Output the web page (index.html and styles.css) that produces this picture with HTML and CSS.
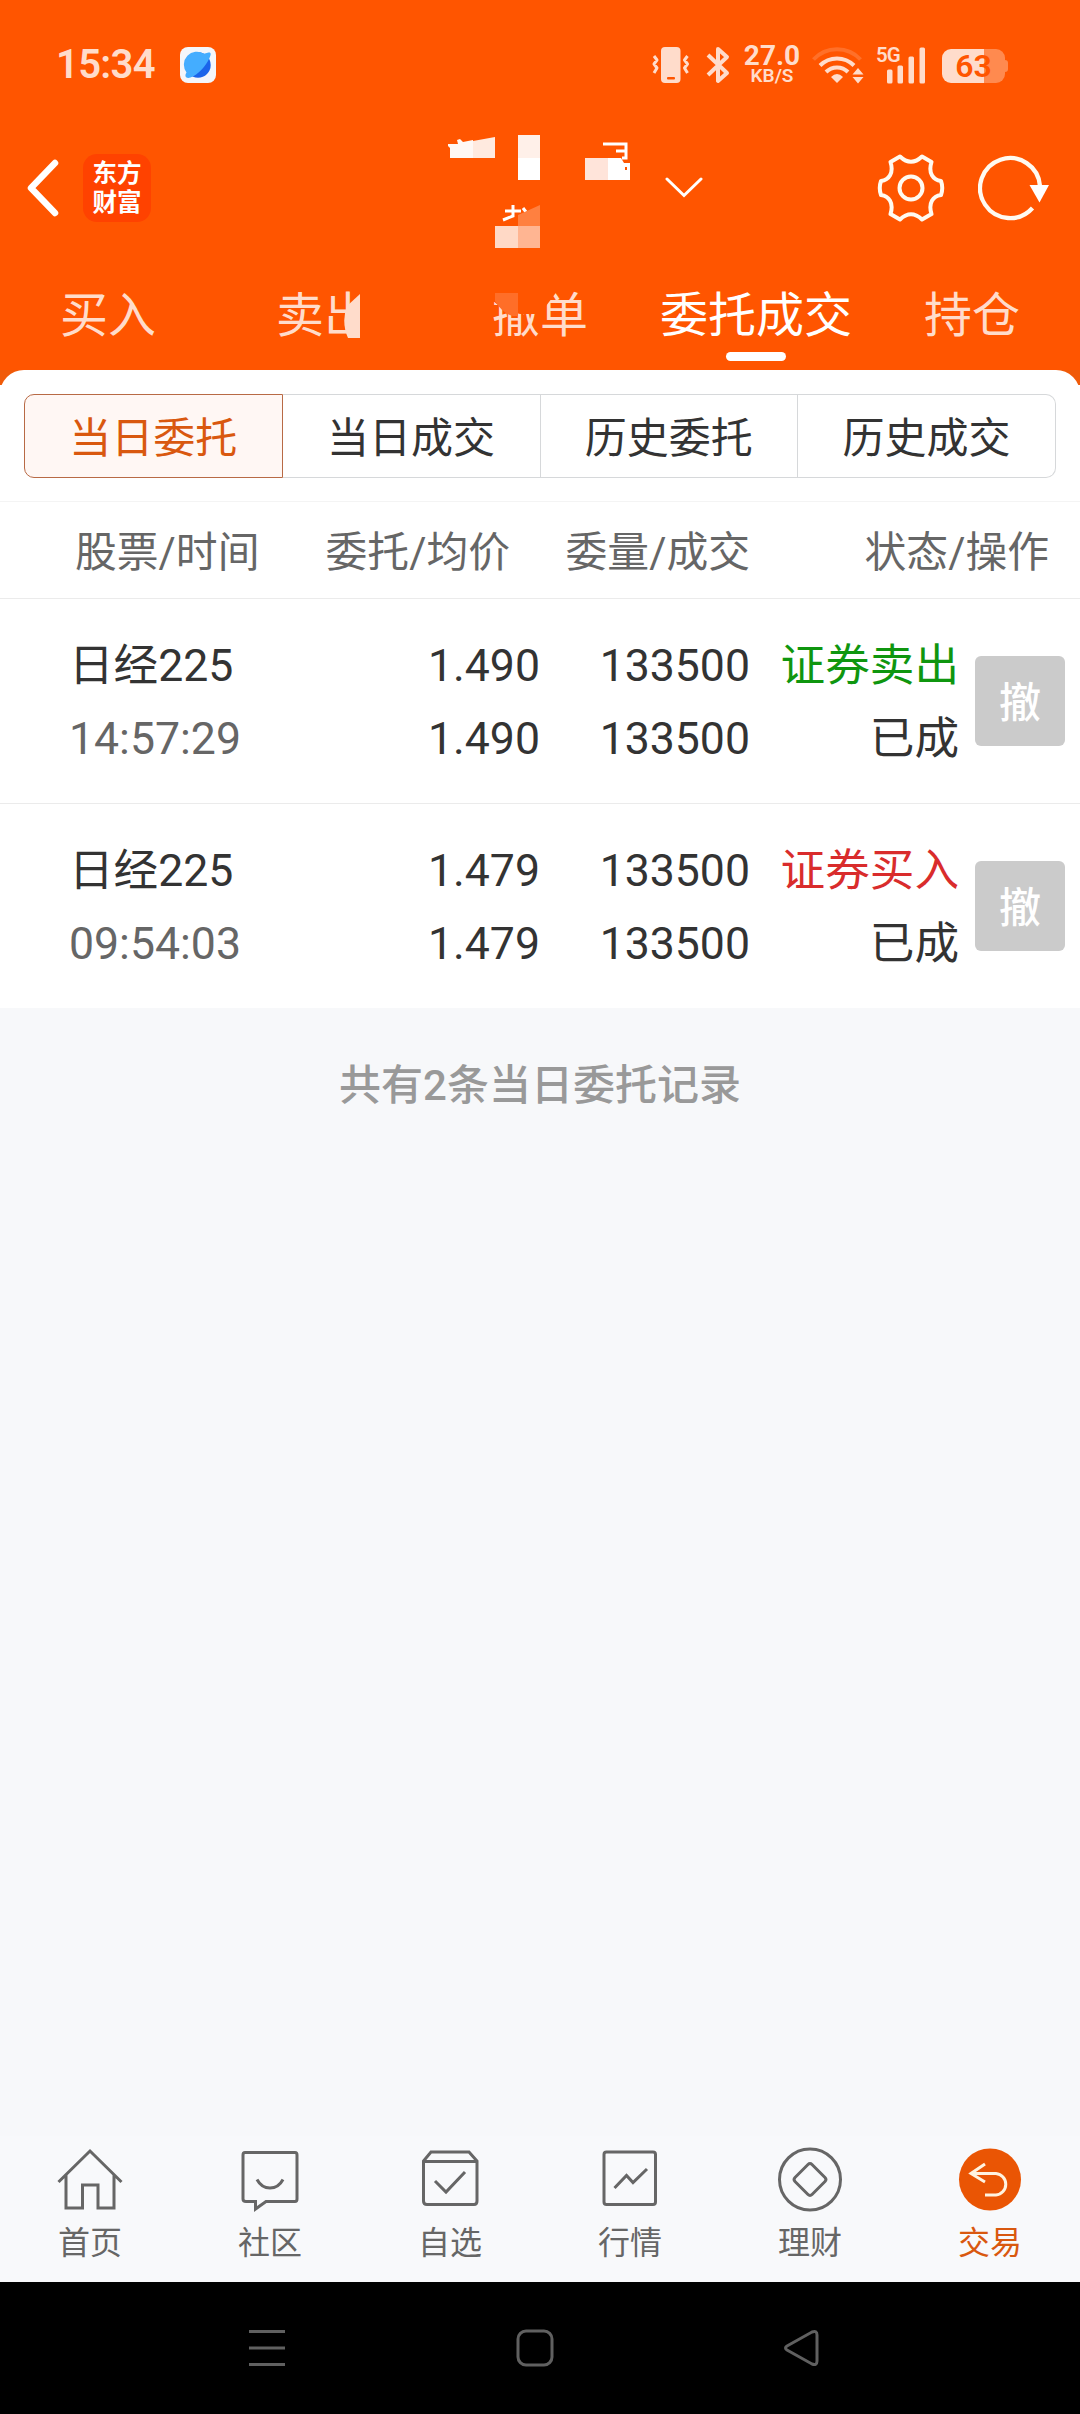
FILE: index.html
```html
<!DOCTYPE html>
<html lang="zh-CN">

<head>
  <meta charset="UTF-8">
  <meta name="viewport" content="width=device-width, initial-scale=1.0">
  <title>委托成交</title>
  <link rel="stylesheet" href="styles.css">
</head>

<body>
  <div class="app">
    <header class="header">
      <div class="status-bar">
        <span class="time">15:34</span>
        <svg class="app-icon" width="36" height="36" viewBox="0 0 36 36">
          <rect width="36" height="36" rx="8" fill="#f4f6fa" />
          <circle cx="18" cy="18" r="12.7" fill="#1b64ea" />
          <path d="M28.500 5.500C31.500 5 31 8 29.500 11C26 19 18 28 10.500 30.500C6 32 4 29 6.500 25.500A13 13 0 0 1 24 6.800Z" fill="#44adff" />
        </svg>
        <div class="status-icons">
          <svg class="vibrate" width="38" height="38" viewBox="0 0 38 38">
            <rect x="9" y="1" width="19.500" height="36" rx="4" fill="#ffdccb" />
            <rect x="15" y="31" width="8" height="2.500" rx="1" fill="#ff5500" />
            <path d="M2 10L5 14L2 18L5 22L2 27M35.500 10L32.500 14L35.500 18L32.500 22L35.500 27" fill="none" stroke="#ffdccb" stroke-width="3" stroke-linejoin="round" />
          </svg>
          <svg class="bluetooth" width="24" height="38" viewBox="0 0 24 38">
            <path d="M2 9L21 27L12 35V3L21 11L2 29" fill="none" stroke="#ffdccb" stroke-width="4" stroke-linejoin="round" />
          </svg>
          <div class="speed"><b>27.0</b><span>KB/S</span></div>
          <svg class="wifi" width="52" height="38" viewBox="0 0 52 38">
            <g fill="none" stroke="#ffdccb" stroke-width="4">
              <path d="M1.500 13.500A32 32 0 0 1 48.500 13.500" opacity=".2" />
              <path d="M8 19.500A24 24 0 0 1 42 19.500" />
              <path d="M14 26A15.500 15.500 0 0 1 36 26" />
            </g>
            <path d="M25 37L19 31Q25 25 31 31Z" fill="#ffdccb" />
            <path d="M46 22L51.500 28.500H40.500ZM46 37.500L51.500 31H40.500Z" fill="#ffdccb" />
          </svg>
          <div class="signal">
            <span class="net">5G</span>
            <svg width="48" height="38" viewBox="0 0 48 38" fill="#ffdccb">
              <rect x="10" y="23.500" width="5.500" height="14" rx="1.500" />
              <rect x="20.500" y="19.500" width="5.500" height="18" rx="1.500" />
              <rect x="31.500" y="10.500" width="5.500" height="27" rx="1.500" />
              <rect x="42.500" y="1.500" width="5.500" height="36" rx="1.500" />
            </svg>
          </div>
          <div class="battery"><span>63</span></div>
        </div>
      </div>

      <div class="title-bar">
        <svg class="back" width="34" height="58" viewBox="0 0 34 58">
          <path d="M29 4L5 29L29 54" fill="none" stroke="#fff" stroke-width="6.500" stroke-linecap="round" stroke-linejoin="round" />
        </svg>
        <div class="logo"><span>东方</span><span>财富</span></div>
        <!-- masked account name -->
        <svg class="account" width="182" height="114" viewBox="0 0 182 114">
          <path d="M2 29V19L0 17V15H10L9 11L12 10L15 13L25 11V29Z" fill="#fff8f4" />
          <path d="M25 12L47 8V29H25Z" fill="#ffeadf" />
          <rect x="70" y="6" width="22" height="23" fill="#fff0e9" />
          <rect x="70" y="29" width="22" height="22" fill="#fff" />
          <rect x="137" y="29" width="23" height="22" fill="#ffe4da" />
          <path d="M160 29H173L176 34H182V51H160Z" fill="#fff" />
          <path d="M155 15H178V29H174M168 22H178" fill="none" stroke="#fff" stroke-width="3" />
          <path d="M177 38h2v3h-2z" fill="#ff5500" />
          <path d="M57 82H73M65 76V87L55 91M75 79L78 83" fill="none" stroke="#fff" stroke-width="3" />
          <path d="M70 86L92 76V97H70Z" fill="#ff8040" />
          <rect x="47" y="97" width="23" height="22" fill="#ffd9c6" />
          <rect x="70" y="97" width="22" height="22" fill="#ffb592" />
        </svg>
        <svg class="arrow-down" width="38" height="22" viewBox="0 0 38 22">
          <path d="M2 2L19 18.500L36 2" fill="none" stroke="#fff" stroke-width="3" stroke-linecap="round" />
        </svg>
        <svg class="gear" width="68" height="68" viewBox="-34 -34 68 68">
          <path d="M-11 -31.500Q0 -21 11 -31.500L20.500 -26C17 -15 22 -8 30 -7Q32.500 0 30 7C22 8 17 15 20.500 26L11 31.500Q0 21 -11 31.500L-20.500 26C-17 15 -22 8 -30 7Q-32.500 0 -30 -7C-22 -8 -17 -15 -20.500 -26Z" fill="none" stroke="#fffaf0" stroke-width="4" stroke-linejoin="round" />
          <circle r="11.500" fill="none" stroke="#fffaf0" stroke-width="4" />
        </svg>
        <svg class="refresh" width="72" height="68" viewBox="0 0 72 68">
          <path d="M62 32A30 30 0 1 0 54.500 54" fill="none" stroke="#fffaf0" stroke-width="4.300" />
          <path d="M51.500 31H71L61.500 48.500Z" fill="#fff" />
        </svg>
      </div>

      <nav class="tabs">
        <span class="tab">买入</span>
        <span class="tab">卖出
          <svg class="mask-sell" width="30" height="50" viewBox="0 0 30 50">
            <path d="M16 0H30V50H16Z" fill="#ff5500" />
            <path d="M3 16L16 4V48H4Q-3 32 3 16Z" fill="#ffdccb" />
          </svg>
        </span>
        <span class="tab">撤单
          <svg class="mask-cancel" width="68" height="28" viewBox="0 0 68 28">
            <path d="M4 0H66L54 16L50 24H28L12 20L0 10V0Z" fill="#ff5500" />
            <path d="M3 3H26V26H21Q11 24 3 11Z" fill="#ff6e28" />
          </svg>
        </span>
        <span class="tab active">委托成交</span>
        <span class="tab">持仓</span>
      </nav>
      <div class="corner"><div class="corner-sheet"></div></div>
    </header>

    <section class="orders">
      <div class="segment">
        <span class="seg on">当日委托</span>
        <span class="seg">当日成交</span>
        <span class="seg">历史委托</span>
        <span class="seg">历史成交</span>
      </div>
      <div class="row thead">
        <span class="stock">股票/时间</span>
        <span class="price">委托/均价</span>
        <span class="amount">委量/成交</span>
        <span class="state">状态/操作</span>
      </div>
      <div class="row">
        <div class="stock"><p>日经225</p><p class="gray">14:57:29</p></div>
        <div class="price"><p>1.490</p><p>1.490</p></div>
        <div class="amount"><p>133500</p><p>133500</p></div>
        <div class="state"><p class="sell">证券卖出</p><p>已成</p></div>
        <span class="cancel">撤</span>
      </div>
      <div class="row">
        <div class="stock"><p>日经225</p><p class="gray">09:54:03</p></div>
        <div class="price"><p>1.479</p><p>1.479</p></div>
        <div class="amount"><p>133500</p><p>133500</p></div>
        <div class="state"><p class="buy">证券买入</p><p>已成</p></div>
        <span class="cancel">撤</span>
      </div>
    </section>

    <p class="summary">共有2条当日委托记录</p>

    <nav class="tabbar">
      <div class="item">
        <svg width="66" height="66" viewBox="0 0 66 66">
          <path d="M1.500 35L33 4L64.500 35M9 28V61H25.500V38H41V61H57V28" />
        </svg>
        <span>首页</span>
      </div>
      <div class="item">
        <svg width="66" height="66" viewBox="0 0 66 66">
          <path d="M8 5.500H58Q60 5.500 60 8V52Q60 54.500 58 54.500H29L18.500 62V54.500H9Q6 54.500 6 52V8Q6 5.500 8 5.500ZM20 32.500Q24.500 41 33 41Q41.500 41 46 32.500" />
        </svg>
        <span>社区</span>
      </div>
      <div class="item">
        <svg width="66" height="66" viewBox="0 0 66 66">
          <path d="M14 5H52L60 14V54Q60 57.500 57 57.500H10Q6.500 57.500 6.500 54V14ZM6.500 14.500H60M18 34L29 45L48 25" />
        </svg>
        <span>自选</span>
      </div>
      <div class="item">
        <svg width="66" height="66" viewBox="0 0 66 66">
          <rect x="7" y="5" width="51.500" height="52.500" rx="2.500" />
          <path d="M17.500 41L29.500 28.500L36 35.500L50 22" />
        </svg>
        <span>行情</span>
      </div>
      <div class="item">
        <svg width="66" height="66" viewBox="0 0 66 66">
          <circle cx="33" cy="32.500" r="30.500" />
          <path d="M35 17.500L48 30.500Q50 32.500 48 34.500L35 47.500Q33 49.500 31 47.500L18 34.500Q16 32.500 18 30.500L31 17.500Q33 15.500 35 17.500Z" />
        </svg>
        <span>理财</span>
      </div>
      <div class="item current">
        <svg width="66" height="66" viewBox="0 0 66 66">
          <circle class="disc" cx="33" cy="32.500" r="31" />
          <path class="turn" d="M28 17L14 26.500L28 35M15 26.500H39A10.800 10.800 0 0 1 39 48H28" />
        </svg>
        <span>交易</span>
      </div>
    </nav>

    <footer class="system-nav">
      <svg class="menu" width="36" height="38" viewBox="0 0 36 38"><path d="M0 2.500H36M0 19H36M0 35.500H36" /></svg>
      <svg class="home" width="38" height="38" viewBox="0 0 38 38"><rect x="2" y="2" width="34" height="34" rx="8" /></svg>
      <svg class="return" width="38" height="38" viewBox="0 0 38 38"><path d="M4 17L29 3Q34 1 34 6V32Q34 37 29 35L4 21Q1 19 4 17Z" /></svg>
    </footer>
  </div>
</body>

</html>
```
FILE: styles.css
```css
* {
  box-sizing: border-box;
}

body {
  margin: 0;
  background: #f7f8fa;
  color: #333;
  font-family: Roboto, "Noto Sans CJK SC", sans-serif;
}

p {
  margin: 0;
}

svg {
  display: block;
  flex: none;
}

.app {
  display: flex;
  flex-direction: column;
  width: 1080px;
  height: 2414px;
}

/* header */
.header {
  background: #ff5500;
  color: #fff;
}

.status-bar {
  display: flex;
  align-items: center;
  height: 129px;
  padding: 0 72px 0 56px;
  color: #ffdccb;
}

.time {
  width: 124px;
  font-size: 40px;
  font-weight: 600;
  line-height: 1;
  letter-spacing: -0.700px;
}

.status-icons {
  display: flex;
  align-items: center;
  margin-left: auto;
}

.bluetooth {
  margin-left: 16px;
}

.speed {
  display: flex;
  flex-direction: column;
  align-items: center;
  width: 54px;
  margin-left: 15px;
}

.speed b {
  font-size: 28px;
  line-height: 22px;
}

.speed span {
  font-size: 19px;
  font-weight: 600;
  line-height: 17px;
}

.wifi {
  margin-left: 13px;
}

.signal {
  position: relative;
  margin-left: 13px;
}

.net {
  position: absolute;
  left: -1px;
  top: 0;
  font-size: 20.500px;
  font-weight: 600;
  line-height: 18px;
  letter-spacing: -1px;
}

.battery {
  position: relative;
  width: 63px;
  height: 34px;
  margin: 2px 3px 0 17px;
  border-radius: 9px;
  background: linear-gradient(to right, #ffdccb 42px, #ff8a4f 42px);
  color: #ff5500;
  font-size: 32px;
  font-weight: 600;
  line-height: 35px;
  text-align: center;
}

.battery::after {
  content: "";
  position: absolute;
  right: -3px;
  top: 11px;
  width: 3px;
  height: 12px;
  border-radius: 0 3px 3px 0;
  background: #ff8a4f;
}

.title-bar {
  display: flex;
  align-items: center;
  height: 117px;
  padding: 0 30px 0 26px;
}

.logo {
  display: flex;
  flex-direction: column;
  align-items: center;
  justify-content: center;
  width: 68px;
  height: 68px;
  margin-left: 23px;
  border-radius: 14px;
  background: #ff4200;
  font-size: 24.500px;
  font-weight: 700;
  line-height: 29px;
}

.account {
  margin: 0 0 3px 297px;
  overflow: visible;
}

.arrow-down {
  margin-left: 35px;
}

.gear {
  margin-left: auto;
}

.refresh {
  margin-left: 33px;
}

.tabs {
  display: flex;
  height: 124px;
}

.tab {
  position: relative;
  flex: 1;
  padding-top: 35px;
  color: #ffdccb;
  font-size: 48px;
  line-height: 70px;
  text-align: center;
  white-space: nowrap;
}

.active {
  color: #fff;
}

.active::after {
  content: "";
  position: absolute;
  left: 78px;
  top: 106px;
  width: 60px;
  height: 9px;
  border-radius: 4.500px;
  background: #fff;
}

.mask-sell {
  position: absolute;
  left: 128px;
  top: 44px;
}

.mask-cancel {
  position: absolute;
  left: 60px;
  top: 44px;
}

.corner {
  height: 15px;
  overflow: hidden;
  background: #f05a08;
}

.corner-sheet {
  height: 60px;
  border-radius: 24px;
  background: #fff;
}

/* order list */
.orders {
  background: #fff;
}

.segment {
  display: flex;
  height: 117px;
  padding: 9px 24px 23px;
  border-bottom: 1px solid #f4f4f4;
}

.seg {
  flex: 1;
  border: 1px solid #d6d8da;
  font-size: 42px;
  line-height: 87px;
  text-align: center;
}

.seg + .seg {
  border-left-width: 0;
}

.seg:first-child {
  border-radius: 10px 0 0 10px;
}

.seg:last-child {
  border-radius: 0 10px 10px 0;
}

.seg.on {
  border-color: #b86a45;
  background: #fff7f4;
  color: #d9580f;
}

.row {
  display: flex;
  align-items: center;
  height: 205px;
  padding: 0 15px 0 69px;
  border-bottom: 1px solid #ebebeb;
  font-size: 44.600px;
  line-height: 73px;
}

.row:last-child {
  height: 204px;
  border-bottom: 0;
}

.thead {
  height: 97px;
  padding: 0 31px 0 75px;
  color: #666;
  font-size: 41.800px;
}

.stock,
.price,
.amount,
.state {
  padding-top: 4px;
}

.stock {
  width: 186px;
}

.price {
  width: 285px;
  text-align: right;
}

.amount {
  width: 210px;
  text-align: right;
}

.state {
  width: 209px;
  text-align: right;
}

.thead .price {
  width: 249px;
}

.thead .amount {
  width: 240px;
}

.thead .state {
  width: 299px;
}

.gray {
  color: #666;
}

.sell {
  color: #0f960f;
}

.buy {
  color: #d92c2c;
}

.cancel {
  width: 90px;
  height: 90px;
  margin-left: auto;
  border-radius: 6px;
  background: #cbcbcb;
  color: #fff;
  font-size: 42px;
  font-weight: 500;
  line-height: 95px;
  text-align: center;
}

.summary {
  padding-top: 42px;
  color: #999;
  font-size: 42px;
  font-weight: 500;
  line-height: 72px;
  text-align: center;
}

/* bottom bars */
.tabbar {
  display: flex;
  height: 146px;
  margin-top: auto;
  background: #f8f9fb;
}

.item {
  display: flex;
  flex: 1;
  flex-direction: column;
  align-items: center;
  padding-top: 11px;
  color: #666;
  font-size: 32px;
  line-height: 61px;
}

.item svg {
  fill: none;
  stroke: #666;
  stroke-width: 3;
}

.current {
  color: #d9580f;
}

.item .disc {
  fill: #ea5504;
  stroke: none;
}

.item .turn {
  stroke: #fff3e0;
}

.system-nav {
  display: flex;
  align-items: center;
  height: 132px;
  padding-left: 249px;
  background: #000;
}

.system-nav svg {
  fill: none;
  stroke: #606060;
  stroke-width: 3;
}

.home {
  margin-left: 231px;
}

.return {
  margin-left: 229px;
}
```
